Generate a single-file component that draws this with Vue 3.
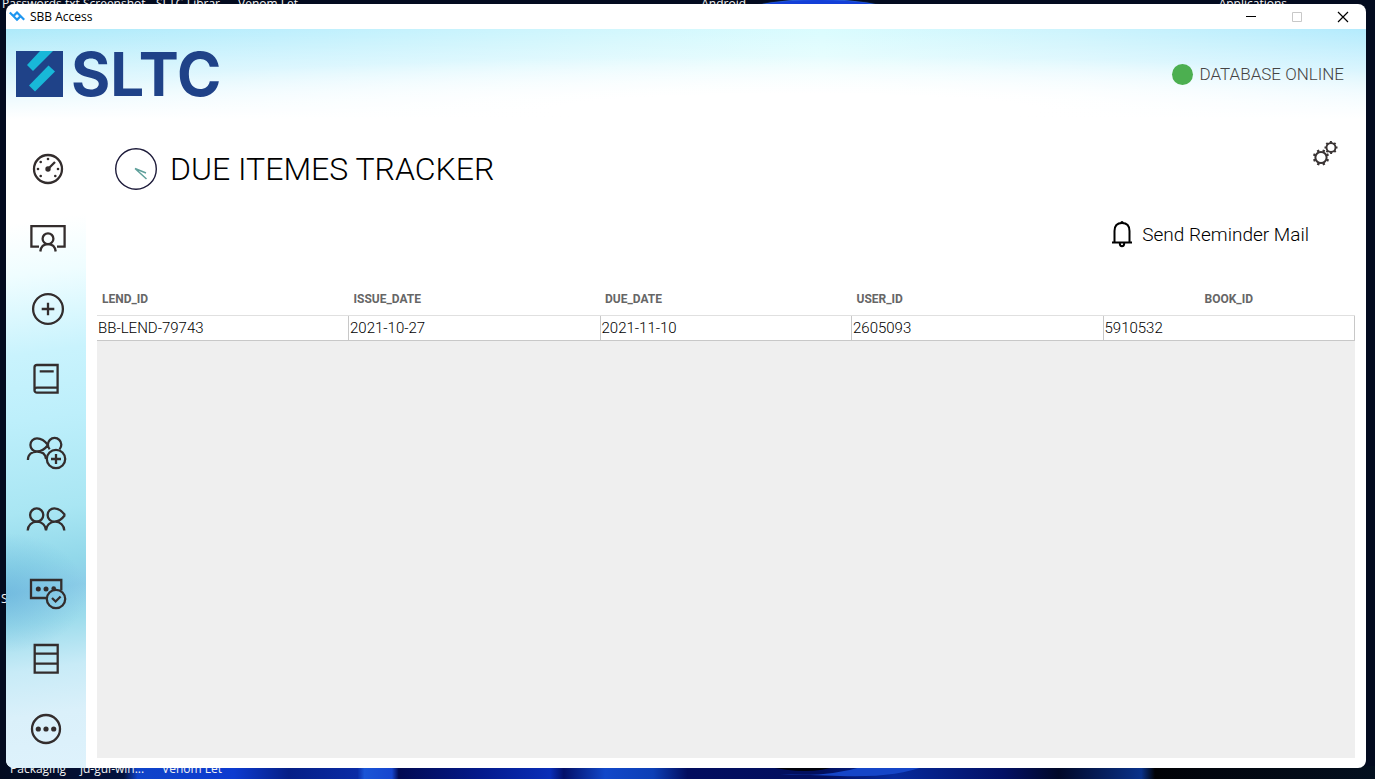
<script setup>
const topLabels = [
  { text: 'Passwords.txt Screenshot', cls: 'l-pass' },
  { text: 'SLTC-Librar', cls: 'l-sltc' },
  { text: 'Venom Let', cls: 'l-venom' },
  { text: 'Android', cls: 'l-android' },
  { text: 'Applications', cls: 'l-apps' },
]
const bottomLabels = [
  { text: 'Packaging', cls: 'b-pack' },
  { text: 'jd-gui-win...', cls: 'b-jd' },
  { text: 'Venom Let', cls: 'b-venom' },
]

const nav = [
  {
    label: 'Dashboard',
    circles: [[42, 35, 14]],
    dots: [[42, 25, 1.3], [34.7, 28, 1.3], [32, 35, 1.3], [34.7, 42, 1.3], [49.3, 42, 1.3], [52, 35, 1.3], [42, 35, 2.7]],
    path: 'M42 35l7-7',
  },
  {
    label: 'Lend',
    circles: [[42, 34.7, 5.4]],
    dots: [],
    path: 'M33 42.7h-7.6V22.2h33.2v20.5H51M34.3 47.5c.6-4.5 3.6-7.300 7.7-7.300s7.1 2.8 7.7 7.300',
  },
  { label: 'Add', circles: [[42, 35, 14.9]], dots: [], path: 'M35.7 35h12.6M42 28.7v12.6' },
  {
    label: 'Books',
    circles: [],
    dots: [],
    path: 'M52 43.700H31a2.500 2.500 0 0 0 0 5h20.600V21H31q-2.500 0-2.500 2.500v22.700M33.700 27.300h14',
  },
  {
    label: 'Add member',
    circles: [[50, 45, 9.2]],
    dots: [],
    path: 'M42 31Q37 24.300 31 24.300a6.600 6.600 0 0 0 0 13.200Q37 37.500 42 31M43.700 35.200a6.700 6.700 0 1 1 9.800 0M21.900 46C22 40.500 26 37.600 31 37.600S39.500 40 40 45M45 45h10M50 40v10',
  },
  {
    label: 'Members',
    circles: [[30.7, 31, 6.6]],
    dots: [],
    path: 'M21.700 46.500a9.150 8.800 0 0 1 18.300 0a9.150 8.800 0 0 1 18.300 0M59 31Q54 24.300 48.300 24.300a6.700 6.700 0 0 0 0 13.400Q54 37.700 59 31',
  },
  {
    label: 'Returns',
    circles: [[50, 45, 9.2]],
    dots: [[32.3, 35, 2.5], [40, 35, 2.5], [47.7, 34.6, 2.3]],
    path: 'M40.500 44H25V26h30.300v10.500M46 44l3.600 3.500 5-5',
  },
  { label: 'Records', circles: [], dots: [], path: 'M28.700 21h23v27.700h-23zM28.700 29.700h23M28.700 39.700h23' },
  {
    label: 'More',
    circles: [[40, 35, 14]],
    dots: [[32.3, 35, 2.6], [40, 35, 2.6], [47.7, 35, 2.6]],
    path: '',
  },
]

const columns = ['LEND_ID', 'ISSUE_DATE', 'DUE_DATE', 'USER_ID', 'BOOK_ID']
const rows = [['BB-LEND-79743', '2021-10-27', '2021-11-10', '2605093', '5910532']]
const teeth = [22, 67, 112, 157, 202, 247, 292, 337]
</script>

<template>
  <div class="desktop">
    <div class="wallpaper" aria-hidden="true">
      <div class="glow"></div>
      <svg class="bloom" viewBox="0 0 1375 13" preserveAspectRatio="none">
        <defs>
          <linearGradient id="bloom">
            <stop offset="0" stop-color="#030b1f" />
            <stop offset=".09" stop-color="#03123f" />
            <stop offset=".1" stop-color="#0f43c9" />
            <stop offset=".17" stop-color="#0d3bd0" />
            <stop offset=".21" stop-color="#061f86" />
            <stop offset=".26" stop-color="#0a2ba5" />
            <stop offset=".265" stop-color="#1a55d6" />
            <stop offset=".285" stop-color="#1746cf" />
            <stop offset=".29" stop-color="#020a52" />
            <stop offset=".35" stop-color="#041a8c" />
            <stop offset=".4" stop-color="#0a2eb8" />
            <stop offset=".41" stop-color="#031069" />
            <stop offset=".44" stop-color="#1248c9" />
            <stop offset=".475" stop-color="#0d3fb6" />
            <stop offset=".5" stop-color="#020d5e" />
            <stop offset=".6" stop-color="#02105f" />
            <stop offset=".65" stop-color="#062a9c" />
            <stop offset=".73" stop-color="#031064" />
            <stop offset=".77" stop-color="#010828" />
            <stop offset=".83" stop-color="#0a328a" />
            <stop offset=".84" stop-color="#010206" />
            <stop offset=".88" stop-color="#02060e" />
            <stop offset="1" stop-color="#04101f" />
          </linearGradient>
        </defs>
        <path d="M0 0h1375v13H0z" fill="url(#bloom)" />
        <path d="M765 0h72q-14 5-32 5t-40-5" fill="#01030c" />
        <path d="M780 8q45 4 85-8h60q-30 12-85 10z" fill="#1546c8" />
      </svg>
    </div>
    <span v-for="l in topLabels" :key="l.cls" class="desk-label at-top" :class="l.cls">{{ l.text }}</span>
    <span class="desk-label l-side">S</span>
    <span v-for="l in bottomLabels" :key="l.cls" class="desk-label at-bottom" :class="l.cls">{{ l.text }}</span>

    <div class="window">
      <div class="titlebar">
        <svg class="app-icon" width="16" height="11" viewBox="0 0 16 11" fill="none" stroke="#1e96f0" stroke-width="2.200">
          <path d="M.8 1.500L8 8.700l3.600-3.600M4.400 5.100L8 1.500l7.200 7.200" />
        </svg>
        <span class="app-name">SBB Access</span>
        <button class="win-btn" aria-label="Minimize"><svg width="12" height="12"><path d="M1 5.500h10" stroke="#000" /></svg></button>
        <button class="win-btn" aria-label="Maximize" disabled><svg width="12" height="12"><path d="M1.500 1.500h9v9h-9z" fill="none" stroke="#c8c8c8" /></svg></button>
        <button class="win-btn" aria-label="Close"><svg width="12" height="12"><path d="M1 1l10 10M11 1L1 11" stroke="#000" stroke-width="1.200" /></svg></button>
      </div>

      <header class="banner">
        <div class="logo">
          <svg width="47" height="46" viewBox="0 0 47 46">
            <path d="M0 0h47v46H0z" fill="#1f4288" />
            <path d="M24 0h13L17 20l-6-6z" fill="#18b8d8" />
            <path d="M32.500 14.500l6.500 6L19 40.500l-6-6z" fill="#18b8d8" />
          </svg>
          <span class="logo-text">SLTC</span>
        </div>
        <div class="status"><i class="led"></i>DATABASE ONLINE</div>
      </header>

      <div class="body">
        <nav class="sidebar" aria-label="Main">
          <button v-for="item in nav" :key="item.label" class="nav-btn" :aria-label="item.label">
            <svg width="80" height="70" viewBox="0 0 80 70" fill="none" stroke="#332d2d" stroke-width="2.300">
              <circle v-for="(c, i) in item.circles" :key="'c' + i" :cx="c[0]" :cy="c[1]" :r="c[2]" />
              <path :d="item.path" />
              <circle v-for="(d, i) in item.dots" :key="'d' + i" :cx="d[0]" :cy="d[1]" :r="d[2]" fill="#332d2d" stroke="none" />
            </svg>
          </button>
        </nav>

        <main class="content">
          <div class="heading">
            <svg class="clock" width="44" height="44" viewBox="0 0 44 44" fill="none">
              <circle cx="22" cy="22" r="20.300" stroke="#1d1b3a" stroke-width="1.400" />
              <path d="M21 21.500l11.500 10.500M21 21.500l11 4.500" stroke="#5fa09b" stroke-width="1.500" />
            </svg>
            <h1>DUE ITEMES TRACKER</h1>
            <button class="gear-btn" aria-label="Settings">
              <svg width="28" height="28" viewBox="0 0 28 28" fill="none" stroke="#3a3434">
                <g transform="translate(10 17.500)">
                  <circle r="5.600" stroke-width="2" />
                  <path v-for="t in teeth" :key="t" d="M0-6v-2.200" stroke-width="2.400" :transform="`rotate(${t})`" />
                </g>
                <g transform="translate(20 7.500)">
                  <circle r="4.500" stroke-width="1.900" />
                  <path v-for="t in teeth" :key="t" d="M0-4.700v-1.800" stroke-width="2" :transform="`rotate(${t + 22})`" />
                </g>
              </svg>
            </button>
          </div>

          <div class="actions">
            <button class="mail-btn">
              <svg width="22" height="28" viewBox="0 0 22 28" fill="none" stroke="#000" stroke-width="2">
                <path d="M1 22.500h20M3.500 22V11Q3.500 3 11 3t7.500 8v11M8.800 23.500a2.200 2.700 0 0 0 4.400 0" />
                <circle cx="11" cy="2.500" r="1.600" fill="#000" stroke="none" />
              </svg>
              Send Reminder Mail
            </button>
          </div>

          <div class="grid-area">
            <table>
              <thead>
                <tr><th v-for="c in columns" :key="c" scope="col">{{ c }}</th></tr>
              </thead>
              <tbody>
                <tr v-for="r in rows" :key="r[0]"><td v-for="v in r" :key="v">{{ v }}</td></tr>
              </tbody>
            </table>
          </div>
        </main>
      </div>
    </div>
  </div>
</template>

<style>
html, body { margin: 0; background: #030b1f; }
</style>

<style scoped>
.desktop {
  position: relative;
  box-sizing: border-box;
  display: flex;
  min-height: 100vh;
  padding: 4px 9px 11px 6px;
  overflow: hidden;
  background: #030b1f;
  font-family: Roboto, "Noto Sans", "Liberation Sans", sans-serif;
}
button { padding: 0; border: 0; background: none; font: inherit; color: inherit; }
svg { display: block; }
.wallpaper { position: absolute; inset: 0; }
.glow { position: absolute; top: 0; left: 54%; width: 11%; height: 28px; border-radius: 50%; background: #133fd8; box-shadow: 0 0 1px 1px #2f6ce8; }
.bloom { position: absolute; bottom: 0; left: 0; width: 100%; height: 13px; }
.desk-label { position: absolute; font: 12px/16px "Open Sans", "Noto Sans", sans-serif; color: #f2f2f2; white-space: nowrap; }
.at-top { top: -4px; }
.at-bottom { bottom: 2px; }
.l-pass { left: 2px; }
.l-sltc { left: 156px; }
.l-venom { left: 238px; }
.l-android { left: 51%; }
.l-apps { right: 88px; }
.l-side { left: 1px; top: 591px; }
.b-pack { left: 10px; }
.b-jd { left: 80px; }
.b-venom { left: 162px; }

.window {
  position: relative;
  flex: 1;
  display: flex;
  flex-direction: column;
  overflow: hidden;
  border-radius: 8px;
  background: #fff;
}
.titlebar { display: flex; align-items: center; height: 25px; padding-left: 3px; }
.app-icon { margin-right: 5px; }
.app-name { flex: 1; font: 12px/16px "Open Sans", "Noto Sans", sans-serif; color: #000; }
.win-btn { display: flex; align-items: center; justify-content: center; width: 46px; height: 24px; }

.banner {
  display: flex;
  align-items: center;
  justify-content: space-between;
  height: 90px;
  padding: 0 22px 0 10px;
  background:
    linear-gradient(180deg, rgba(255, 255, 255, 0) 0%, rgba(255, 255, 255, .55) 50%, #fff 100%),
    radial-gradient(ellipse 60% 60% at 58% 90%, #fff 30%, rgba(255, 255, 255, 0) 100%),
    linear-gradient(90deg, #aeeafa, #bdeffd 20%, #d2f7fd 45%, #dafcfe 60%, #cdf4fd 78%, #b4ebfd);
}
.logo { display: flex; align-items: center; gap: 8px; }
.logo-text { font: 700 60px/70px Inter, "Open Sans", sans-serif; color: #1f4288; }
.status { display: flex; align-items: center; gap: 7px; font-size: 17px; font-weight: 300; line-height: 24px; color: #444; }
.led { width: 21px; height: 21px; border-radius: 50%; background: #4caf50; }

.body { flex: 1; display: flex; }
.sidebar {
  display: flex;
  flex-direction: column;
  width: 80px;
  padding: 15px 0 4px;
  background:
    radial-gradient(ellipse 80px 60px at 0 73%, rgba(90, 170, 215, .5), rgba(90, 170, 215, 0)),
    linear-gradient(172deg, #fff 16%, #effdff 24%, #c9f3fd 36%, #bdeffb 46%, #a9e6f3 60%, #92d8ea 68%, #8ccde8 72%, #9ddcec 77%, #c8ebf7 84%, #daf0fa 91%, #def2fc 100%);
}
.nav-btn { height: 70px; }

.content { flex: 1; min-width: 0; display: flex; flex-direction: column; padding: 0 11px 10px; }
.heading { display: flex; align-items: center; height: 100px; padding: 0 16px 0 17px; }
.clock { margin-right: 12px; }
h1 { flex: 1; margin: 0; font-size: 32px; font-weight: 300; line-height: 40px; color: #000; }
.gear-btn { align-self: flex-start; margin-top: 21px; }
.actions { display: flex; justify-content: flex-end; height: 62px; padding-right: 46px; }
.mail-btn { display: flex; align-items: center; gap: 9px; height: 30px; font-size: 19px; font-weight: 300; color: #000; }

.grid-area { flex: 1; background: #efefef; }
table { width: 100%; border-collapse: collapse; table-layout: fixed; background: #fff; }
th { height: 32px; padding: 2px 5px 0; border-bottom: 1px solid #e0e0e0; font-size: 12px; font-weight: 700; text-align: left; color: #666; }
th:last-child { text-align: center; }
td { height: 24px; padding: 0 1px; border-right: 1px solid #c8c8c8; border-bottom: 1px solid #c8c8c8; font-size: 15px; font-weight: 300; color: #000; }
</style>
